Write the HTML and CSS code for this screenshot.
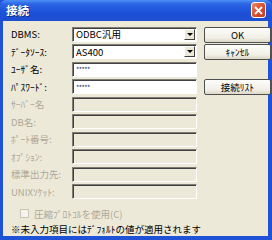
FILE: index.html
```html
<!DOCTYPE html>
<html lang="ja">
<head>
  <meta charset="UTF-8">
  <title>接続</title>
  <link rel="stylesheet" href="styles.css">
</head>
<body>

<div class="window">
  <div class="titlebar">
    <span class="title">接続</span>
    <span class="close">
      <svg width="9" height="9" viewBox="0 0 9 9"><path d="M1 1L8 8M8 1L1 8" stroke="#fff" stroke-width="1.8"/></svg>
    </span>
  </div>

  <div class="client">
    <div class="form">
      <label>DBMS:</label>
      <div class="select"><span>ODBC汎用</span><i class="drop"></i></div>
      <button class="btn">OK</button>

      <label>ﾃﾞｰﾀｿｰｽ:</label>
      <div class="select"><span>AS400</span><i class="drop"></i></div>
      <button class="btn">ｷｬﾝｾﾙ</button>

      <label>ﾕｰｻﾞ名:</label>
      <div class="edit">*****</div>
      <span></span>

      <label>ﾊﾟｽﾜｰﾄﾞ:</label>
      <div class="edit">*****</div>
      <button class="btn">接続ﾘｽﾄ</button>

      <label class="off">ｻｰﾊﾞｰ名</label>
      <div class="edit off"></div>
      <span></span>

      <label class="off">DB名:</label>
      <div class="edit off"></div>
      <span></span>

      <label class="off">ﾎﾟｰﾄ番号:</label>
      <div class="edit off"></div>
      <span></span>

      <label class="off">ｵﾌﾟｼｮﾝ:</label>
      <div class="edit off"></div>
      <span></span>

      <label class="off">標準出力先:</label>
      <div class="edit off"></div>
      <span></span>

      <label class="off">UNIXｿｹｯﾄ:</label>
      <div class="edit off"></div>
      <span></span>
    </div>

    <div class="check off"><i class="box"></i>圧縮ﾌﾟﾛﾄｺﾙを使用(C)</div>
    <p class="note">※未入力項目にはﾃﾞﾌｫﾙﾄの値が適用されます</p>
  </div>
</div>

</body>
</html>
```

FILE: styles.css
```css
body {
  margin: 0;
  font-family: "Noto Sans CJK JP", "Liberation Sans", sans-serif;
  font-size: 9.5px;
  color: #000;
}
.window {
  width: 272px;
  height: 240px;
  box-sizing: border-box;
  background: #1f52d6;
  padding: 0 4px 4px 3px;
  display: flex;
  flex-direction: column;
}
.titlebar {
  height: 21px;
  margin: 0 -4px 0 -3px;
  padding: 0 6px 0 6px;
  background: linear-gradient(#4d8ff5 0%, #2a64e4 20%, #1c50d8 60%, #1d4fd0 100%);
  border-radius: 6px 6px 0 0;
  display: flex;
  align-items: center;
  justify-content: space-between;
}
.title {
  color: #fff;
  font-weight: bold;
  font-size: 11.5px;
  text-shadow: 1px 1px 0 #0b2c8c;
}
.close {
  width: 13px;
  height: 14px;
  border: 1px solid #fff;
  border-radius: 3px;
  background: linear-gradient(135deg, #ec8a6d, #d8512c 50%, #c23a1c);
  display: flex;
  align-items: center;
  justify-content: center;
}
.client {
  flex: 1;
  background: #ece9d8;
  padding: 6px 4px 0 8px;
}
.form {
  display: grid;
  grid-template-columns: 54px 125px 67px;
  grid-auto-rows: 15px;
  column-gap: 7px;
  row-gap: 2.5px;
}
label {
  display: flex;
  align-items: center;
  white-space: nowrap;
}
.off {
  color: #aca899;
}
.select, .edit {
  box-sizing: border-box;
  border: 1px solid;
  border-color: #7f7d73 #fff #fff #7f7d73;
  box-shadow: inset 1px 1px 0 #404040;
  background: #fff;
  display: flex;
  align-items: center;
  padding-left: 3px;
}
.select span {
  flex: 1;
}
.edit {
  font-size: 7px;
  letter-spacing: -0.5px;
  color: #1b2a6b;
}
.edit.off {
  background: #ece9d8;
}
.drop {
  width: 11px;
  height: 11px;
  margin-right: 1px;
  box-sizing: border-box;
  border: 1px solid;
  border-color: #fff #404040 #404040 #fff;
  background: #ece9d8;
  position: relative;
}
.drop::after {
  content: "";
  position: absolute;
  left: 2px;
  top: 3px;
  border: 3px solid transparent;
  border-top: 3px solid #000;
  border-bottom: 0;
}
.btn {
  font: inherit;
  padding: 0;
  height: 16px;
  box-sizing: border-box;
  border: 1px solid #4f4f4f;
  border-radius: 2px;
  background: linear-gradient(#fdfdfb, #f1efe6 70%, #dcd8c6);
  color: #000;
}
.check {
  display: flex;
  align-items: center;
  gap: 5px;
  margin: 9px 0 0 9px;
  height: 11px;
}
.box {
  width: 7px;
  height: 7px;
  border: 1px solid #c9c6b8;
  background: #f4f3ee;
}
.note {
  margin: 3px 0 0 0;
  white-space: nowrap;
}
```
